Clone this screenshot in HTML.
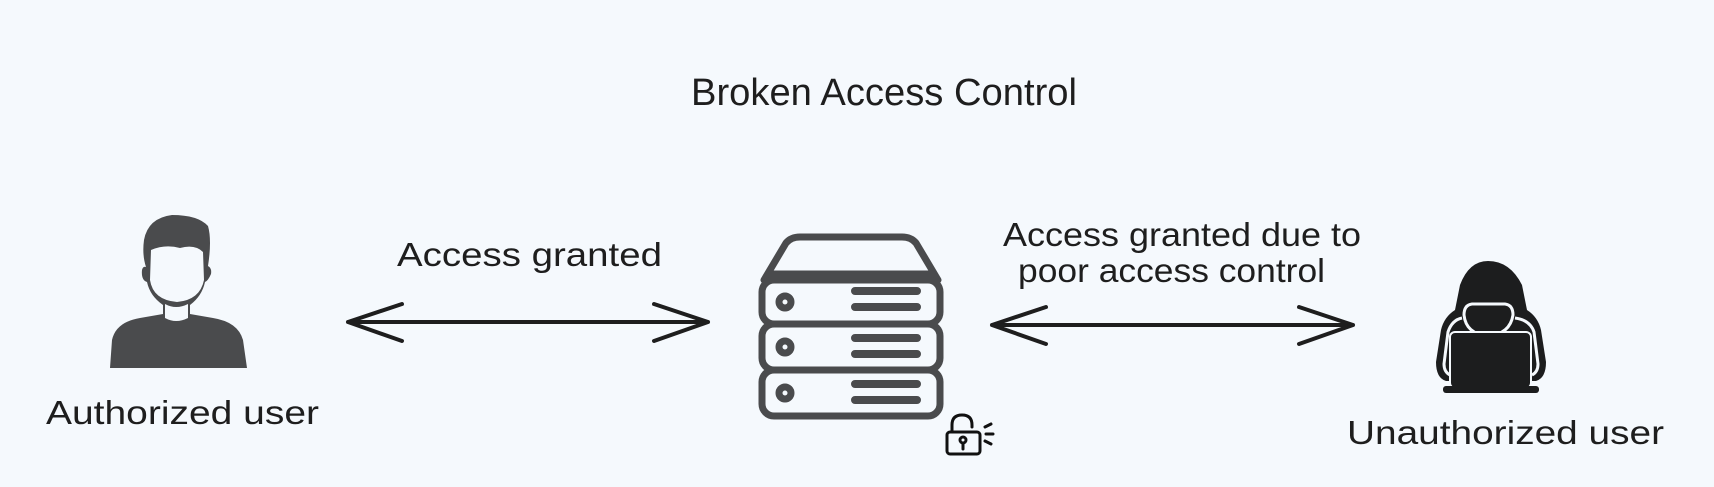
<!DOCTYPE html>
<html><head><meta charset="utf-8"><style>
html,body{margin:0;padding:0;background:#f5f9fd;}
svg{display:block}
text{font-family:"Liberation Sans",sans-serif;fill:#1e1e1e;}
</style></head><body>
<svg width="1714" height="487" viewBox="0 0 1714 487" xmlns="http://www.w3.org/2000/svg">
<rect width="1714" height="487" fill="#f5f9fd"/>
<text x="691" y="105" font-size="38" textLength="386" lengthAdjust="spacingAndGlyphs">Broken Access Control</text>
<text x="46" y="424" font-size="33" textLength="273" lengthAdjust="spacingAndGlyphs">Authorized user</text>
<text x="397" y="266" font-size="33" textLength="265" lengthAdjust="spacingAndGlyphs">Access granted</text>
<text x="1003" y="246" font-size="33" textLength="358" lengthAdjust="spacingAndGlyphs">Access granted due to</text>
<text x="1018" y="282" font-size="33" textLength="307" lengthAdjust="spacingAndGlyphs">poor access control</text>
<text x="1347" y="444" font-size="33" textLength="317" lengthAdjust="spacingAndGlyphs">Unauthorized user</text>

<g stroke="#1e1e1e" stroke-width="4" fill="none" stroke-linecap="round" stroke-linejoin="round">
<path d="M348 322 L708 322 M348 322 L402 304 M348 322 L402 341 M708 322 L654 304 M708 322 L654 341"/>
<path d="M992 325 L1353 325 M992 325 L1046 307 M992 325 L1046 344 M1353 325 L1299 307 M1353 325 L1299 344"/>
</g>

<!-- user -->
<g fill="#4a4b4d">
<path d="M110 368 L112 340 Q116 322 140 318 L163 314 L163 305 Q150 296 147 282 Q141 280 142 270 Q143 266 146 267 Q142 255 144 240 Q148 218 172 215 Q198 215 208 226 Q212 240 208 266 Q212 268 211 274 Q208 281 205 282 Q202 296 190 305 L190 314 L213 318 Q238 322 243 340 L247 368 Z"/>
</g>
<path d="M151 250 Q165 244 180 248 Q195 244 203 252 L204 280 Q200 300 177 302 Q153 300 150 280 Z" fill="#f5f9fd"/>
<path d="M165 304 L165 318 Q176 324 188 318 L188 304 Q176 310 165 304 Z" fill="#f5f9fd"/>

<!-- server -->
<g stroke="#4a4b4d" stroke-width="7" fill="none" stroke-linecap="round" stroke-linejoin="round">
<path d="M764 280 L786 243 Q791 237 800 237 L902 237 Q911 237 916 243 L938 280"/>
<line x1="770" y1="274" x2="932" y2="274"/>
<rect x="762" y="280" width="178" height="44" rx="12"/>
<rect x="762" y="324" width="178" height="46" rx="12"/>
<rect x="762" y="370" width="178" height="46" rx="12"/>
<circle cx="785" cy="302" r="6"/>
<circle cx="785" cy="347" r="6"/>
<circle cx="785" cy="393" r="6"/>
</g>
<g stroke="#4a4b4d" stroke-width="8" stroke-linecap="round">
<path d="M855 291 H917 M855 307 H917 M855 338 H917 M855 354 H917 M855 384 H917 M855 400 H917"/>
</g>

<!-- lock -->
<g stroke="#111" stroke-width="3" fill="none" stroke-linecap="round" stroke-linejoin="round">
<rect x="947" y="432" width="33" height="22" rx="3"/>
<path d="M952 432 V425 Q952 415 962 415 Q972 415 972 425 V427"/>
<circle cx="963" cy="440" r="3"/>
<path d="M963 443 V449"/>
<path d="M985 427 L991 424 M986 434 L993 434 M985 441 L991 444"/>
</g>

<!-- hacker -->
<g fill="#1c1d1e">
<path d="M1488 261 Q1469 261 1460 285 L1455 310 Q1444 317 1441 330 L1436 362 Q1436 378 1446 381 L1536 381 Q1546 378 1546 362 L1541 330 Q1538 317 1527 310 L1522 285 Q1510 261 1488 261 Z"/>
</g>
<path d="M1464 315 Q1464 305 1472 304 L1505 304 Q1513 305 1513 315 Q1510 334 1488 336 Q1466 334 1464 315 Z" fill="#1c1d1e" stroke="#f5f9fd" stroke-width="3"/>
<path d="M1462 318 Q1452 320 1448 332 L1444 364 Q1444 372 1450 375 M1515 318 Q1530 320 1534 332 L1538 364 Q1538 372 1532 375" fill="none" stroke="#f5f9fd" stroke-width="3"/>
<rect x="1450" y="332" width="81" height="56" rx="5" fill="#1c1d1e" stroke="#f5f9fd" stroke-width="2"/>
<rect x="1443" y="386" width="96" height="7" rx="3" fill="#1c1d1e"/>
</svg>
</body></html>
